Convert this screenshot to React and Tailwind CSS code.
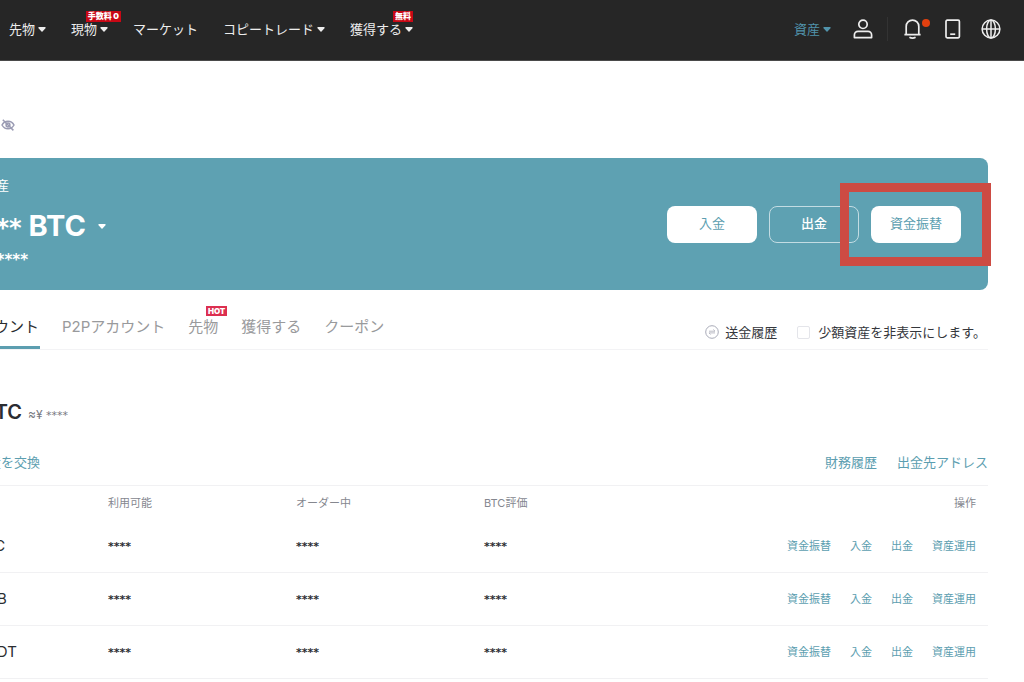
import { useState } from "react";

const navItems = [
  { label: "先物", menu: true },
  { label: "現物", menu: true, badge: "手数料 0", badgePos: "-right-[13px]" },
  { label: "マーケット" },
  { label: "コピートレード", menu: true },
  { label: "獲得する", menu: true, badge: "無料", badgePos: "right-0" },
];

const tabs = [
  { label: "P2Pアカウント" },
  { label: "先物", badge: "HOT" },
  { label: "獲得する" },
  { label: "クーポン" },
];

const coins = ["BTC", "BNB", "USDT"];
const actions = ["資金振替", "入金", "出金", "資産運用"];

function Caret() {
  return (
    <svg className="h-[5px] w-2 shrink-0" viewBox="0 0 8 5" fill="currentColor" aria-hidden="true">
      <path d="M1 0h6a.7.7 0 0 1 .5 1.2L4.5 4.4a.7.7 0 0 1-1 0L.5 1.2A.7.7 0 0 1 1 0z" />
    </svg>
  );
}

function UserIcon() {
  return (
    <svg className="h-5 w-5" viewBox="0 0 20 20" fill="none" stroke="currentColor" strokeWidth="1.7">
      <circle cx="10" cy="5.3" r="4.2" />
      <path d="M1.4 18.6V16A3.6 3.6 0 0 1 5 12.4h10a3.6 3.6 0 0 1 3.6 3.6v2.6z" strokeLinejoin="round" />
    </svg>
  );
}

function BellIcon() {
  return (
    <svg className="h-5 w-[17px]" viewBox="0 0 17 20" fill="none" stroke="currentColor" strokeWidth="1.7">
      <path d="M2.2 15.4v-8a6.3 6.3 0 0 1 12.6 0v8M.4 15.6h16.2" />
      <path d="M5.4 18.2c1.8 1 4.4 1 6.2 0" />
    </svg>
  );
}

function DeviceIcon() {
  return (
    <svg className="h-5 w-4" viewBox="0 0 16 20" fill="none" stroke="currentColor" strokeWidth="1.7">
      <rect x="1" y="1.2" width="13.4" height="17.6" rx="1.2" />
      <path d="M5.2 15.2h5" />
    </svg>
  );
}

function GlobeIcon() {
  return (
    <svg className="h-5 w-5" viewBox="0 0 20 20" fill="none" stroke="currentColor" strokeWidth="1.5">
      <circle cx="10" cy="10" r="8.9" />
      <ellipse cx="10" cy="10" rx="4.4" ry="8.9" />
      <path d="M1.1 10h17.8M10 1.1v17.8" />
    </svg>
  );
}

function EyeOffIcon() {
  return (
    <svg className="h-3 w-[14px]" viewBox="0 0 14 12" fill="none" stroke="currentColor" strokeWidth="1.5">
      <path d="M1 6c1.3-2.4 3.4-3.8 6-3.8S11.7 3.6 13 6c-1.3 2.4-3.4 3.8-6 3.8S2.3 8.4 1 6z" />
      <circle cx="7" cy="6" r="1.9" />
      <path d="M1.8.8l10.6 10.6" />
    </svg>
  );
}

function TransferIcon() {
  return (
    <svg className="h-[14px] w-[14px]" viewBox="0 0 14 14" fill="none" stroke="currentColor">
      <circle cx="7" cy="7" r="6.3" />
      <path d="M4 6.2h6L8.3 4.5M10 7.9H4l1.7 1.7" strokeWidth="0.8" />
    </svg>
  );
}

function Header() {
  return (
    <header className="flex h-[61px] items-center justify-between border-b border-[#4a4a4a] bg-[#262626] pr-[23px] pb-[2px] pl-[9px] text-[13px] leading-5 text-[#ededed]">
      <nav className="flex items-center gap-[25px]">
        {navItems.map((item) => (
          <a key={item.label} href="#" className="relative flex items-center gap-[3px] whitespace-nowrap">
            {item.label}
            {item.menu && <Caret />}
            {item.badge && (
              <span className={`absolute -top-2 bg-[#c80815] px-[2px] text-[8px] leading-[11px] font-black text-white ${item.badgePos}`}>
                {item.badge}
              </span>
            )}
          </a>
        ))}
      </nav>
      <div className="flex items-center">
        <a href="#" className="mr-[22px] flex items-center gap-[3px] text-[#5193ab]">
          資産
          <Caret />
        </a>
        <button type="button" aria-label="アカウント"><UserIcon /></button>
        <span className="mr-4 ml-[14px] h-6 w-px bg-[#333333]" />
        <button type="button" aria-label="通知" className="relative">
          <BellIcon />
          <span className="absolute top-0 -right-[9px] h-2 w-2 rounded-full bg-[#e2400f]" />
        </button>
        <button type="button" aria-label="アプリ" className="ml-6"><DeviceIcon /></button>
        <button type="button" aria-label="言語" className="ml-5"><GlobeIcon /></button>
      </div>
    </header>
  );
}

// Hidden amounts
function Mask({ className }) {
  return <span className={`font-['DejaVu_Sans',sans-serif] ${className}`}>****</span>;
}

function Balance() {
  const solid = "h-[37px] w-[90px] rounded-lg bg-white text-[13px] text-[#5c9eb0]";

  return (
    <section className="flex h-[132px] items-center justify-between rounded-lg bg-[#5ea1b2] pr-[27px] text-white">
      <div className="pb-1">
        <div className="flex w-[33px] justify-end text-[13px] leading-5 whitespace-nowrap">総資産</div>
        <button type="button" className="mt-[13px] flex items-center gap-3 text-[29px] leading-9 font-bold">
          <span className="flex w-[110px] items-baseline justify-end gap-[7px] whitespace-nowrap">
            <Mask className="text-[24px]" />
            BTC
          </span>
          <Caret />
        </button>
        <div className="mt-1 flex w-[52px] justify-end gap-1 text-[15px] leading-5 font-bold whitespace-nowrap">
          ≈¥ <Mask className="text-[15px]" />
        </div>
      </div>
      <div className="flex gap-3">
        <button type="button" className={solid}>入金</button>
        <button type="button" className="h-[37px] w-[90px] rounded-lg border border-[#c3dce3] text-[13px] font-medium">出金</button>
        <div className="relative">
          <button type="button" className={solid}>資金振替</button>
          <span className="pointer-events-none absolute -inset-y-[23px] -right-[30px] -left-[31px] border-[9px] border-[#cd4b43]" />
        </div>
      </div>
    </section>
  );
}

function AccountTabs() {
  const [hideSmall, setHideSmall] = useState(false);

  return (
    <section className="mt-[13px] flex h-[47px] justify-between border-b border-[#f3f3f5]">
      <div className="flex items-stretch gap-[23px] text-[15px] leading-6 text-[#999a9c]">
        <button type="button" className="-mr-px flex w-16 justify-end border-b-[3px] border-[#5c9eb0] pt-3 pr-px whitespace-nowrap text-[#2b2d31]">
          アカウント
        </button>
        {tabs.map((tab) => (
          <button key={tab.label} type="button" className="relative flex pt-3 whitespace-nowrap">
            {tab.label}
            {tab.badge && (
              <span className="absolute top-[3px] -right-[9px] bg-[#dc2f50] px-[2px] text-[8px] leading-[10px] font-black text-white">
                {tab.badge}
              </span>
            )}
          </button>
        ))}
      </div>
      <div className="flex items-center pt-3 pr-[2px] text-[13px] leading-5 text-[#35373c]">
        <a href="#" className="flex items-center gap-[6px]">
          <span className="text-[#a9abb8]"><TransferIcon /></span>
          送金履歴
        </a>
        <label className="ml-5 flex items-center gap-2">
          <input
            type="checkbox"
            checked={hideSmall}
            onChange={(e) => setHideSmall(e.target.checked)}
            className="h-[13px] w-[13px] appearance-none rounded-[2px] border border-[#e4e5ea] bg-white checked:bg-[#5c9eb0]"
          />
          少額資産を非表示にします。
        </label>
      </div>
    </section>
  );
}

function AssetTable() {
  const head = "text-left text-[11px] font-normal text-[#85878f]";

  return (
    <table className="w-full table-fixed border-t border-[#f1f1f3]">
      <thead>
        <tr className="h-[34px]">
          <th className="w-[132px]" aria-label="コイン" />
          <th className={`w-[188px] ${head}`}>利用可能</th>
          <th className={`w-[188px] ${head}`}>オーダー中</th>
          <th className={`w-[188px] ${head}`}>BTC評価</th>
          <th className="pr-3 text-right text-[11px] font-normal text-[#85878f]">操作</th>
        </tr>
      </thead>
      <tbody>
        {coins.map((coin) => (
          <tr key={coin} className="h-[53px] border-b border-[#f1f1f3] text-[15px] leading-5 text-[#2b2d31]">
            <td>{coin}</td>
            <td><Mask className="text-[11px] font-bold" /></td>
            <td><Mask className="text-[11px] font-bold" /></td>
            <td><Mask className="text-[11px] font-bold" /></td>
            <td className="pr-3">
              <div className="flex justify-end gap-[19px] text-[11px] whitespace-nowrap text-[#5c9eb0]">
                {actions.map((action) => (
                  <a key={action} href="#">{action}</a>
                ))}
              </div>
            </td>
          </tr>
        ))}
      </tbody>
    </table>
  );
}

export default function App() {
  return (
    <div className="min-h-screen overflow-hidden bg-white font-['Inter','Noto_Sans_CJK_JP',sans-serif]">
      <Header />
      <main className="mr-9 -ml-6">
        <div className="flex h-[97px] items-center pt-[30px] pl-[25px]">
          <button type="button" aria-label="残高を隠す" className="text-[#9a9bb3]"><EyeOffIcon /></button>
        </div>
        <Balance />
        <AccountTabs />
        <div className="mt-[46px] flex items-baseline gap-[6px] leading-8">
          <h2 className="flex w-[46px] justify-end text-[20px] font-semibold text-[#2b2d31]">BTC</h2>
          <span className="text-[12px] text-[#77797f]">≈¥ <Mask className="text-[11px]" /></span>
        </div>
        <div className="mt-5 mb-[13px] flex justify-between text-[13px] leading-5 whitespace-nowrap text-[#5c9eb0]">
          <a href="#" className="flex w-16 justify-end">少額資産を交換</a>
          <div className="flex gap-5">
            <a href="#">財務履歴</a>
            <a href="#">出金先アドレス</a>
          </div>
        </div>
        <AssetTable />
      </main>
    </div>
  );
}
